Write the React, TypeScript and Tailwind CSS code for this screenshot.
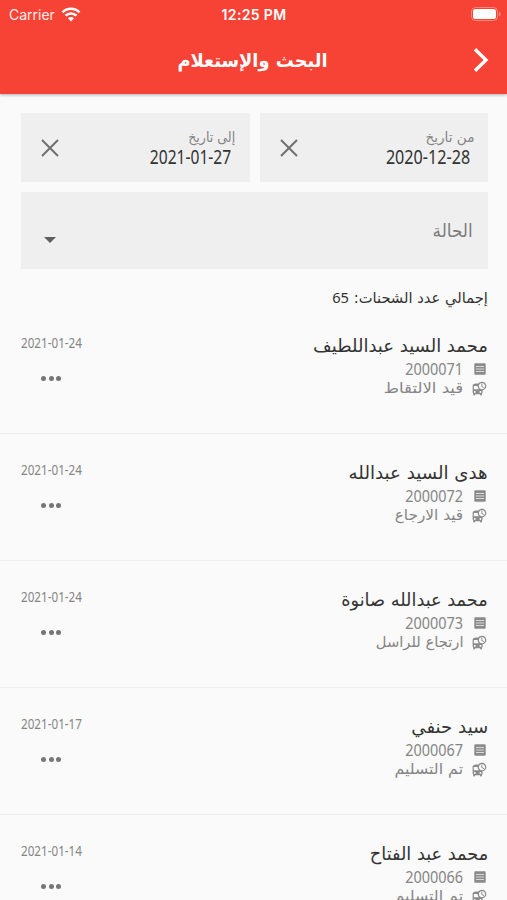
import type { ReactNode } from 'react'
import { MdDepartureBoard } from 'react-icons/md'

interface Shipment {
  code: string
  name: string
  nameScale: string
  status: string
  statusScale: string
  date: string
}

const SHIPMENTS: Shipment[] = [
  { code: '2000071', name: 'محمد السيد عبداللطيف', nameScale: 'scale-x-100', status: 'قيد الالتقاط', statusScale: 'scale-x-[1.1]', date: '2021-01-24' },
  { code: '2000072', name: 'هدى السيد عبدالله', nameScale: 'scale-x-[1.01]', status: 'قيد الارجاع', statusScale: 'scale-x-[1.02]', date: '2021-01-24' },
  { code: '2000073', name: 'محمد عبدالله صانوة', nameScale: 'scale-x-[0.985]', status: 'ارتجاع للراسل', statusScale: 'scale-x-[0.98]', date: '2021-01-24' },
  { code: '2000067', name: 'سيد حنفي', nameScale: 'scale-x-[1.01]', status: 'تم التسليم', statusScale: 'scale-x-[1.055]', date: '2021-01-17' },
  { code: '2000066', name: 'محمد عبد الفتاح', nameScale: 'scale-x-[0.985]', status: 'تم التسليم', statusScale: 'scale-x-[1.055]', date: '2021-01-14' },
]

function StatusBar() {
  return (
    <div dir="ltr" className="relative flex h-7 items-center justify-between pl-[9px] pr-[6px] font-['Inter',sans-serif] text-white">
      <div className="flex items-center gap-[6px]">
        <span className="text-[14px] text-white/90">Carrier</span>
        <svg width="20" height="15" viewBox="0 0 19 15" fill="none" stroke="currentColor" strokeWidth="2.6">
          <path d="M1 5.3a12 12 0 0 1 17 0" />
          <path d="M4 8.7a7.8 7.8 0 0 1 11 0" />
          <path d="M9.5 14.5 6.4 11.3a4.4 4.4 0 0 1 6.2 0Z" fill="currentColor" stroke="none" />
        </svg>
      </div>
      <span className="absolute inset-x-0 pl-px text-center text-[14px] font-semibold tracking-[0.35px]">12:25 PM</span>
      <svg width="30" height="14" viewBox="0 0 30 14">
        <rect x=".5" y=".5" width="26" height="13" rx="4" fill="none" stroke="#fff" strokeOpacity=".35" />
        <rect x="2" y="2" width="23" height="10" rx="2.5" fill="#fff" />
        <path d="M28 4.5c2 .8 2 4.2 0 5Z" fill="#fff" fillOpacity=".4" />
      </svg>
    </div>
  )
}

function Header() {
  return (
    <header className="relative z-10 h-[94px] bg-[#f64336] shadow-[0_1px_3px_rgba(0,0,0,0.3)]">
      <StatusBar />
      <div className="relative flex h-[66px] items-center justify-start pr-[17px]">
        <svg width="18" height="26" viewBox="0 0 18 26" fill="none" stroke="#fff" strokeWidth="3.4" className="-mt-[3px]">
          <path d="M3 2.2 14 13 3 23.8" />
        </svg>
        <h1 className="absolute inset-x-0 -mt-[2px] scale-x-[0.94] pr-[2px] text-center text-[19px] font-bold text-white">
          البحث والإستعلام
        </h1>
      </div>
    </header>
  )
}

function Digits({ children, className }: { children: ReactNode; className: string }) {
  return (
    <span dir="ltr" className={`block w-max font-['Noto_Sans',sans-serif] ${className}`}>
      {children}
    </span>
  )
}

interface DateFieldProps {
  label: string
  value: string
  labelScale: string
  valueScale: string
}

function DateField({ label, value, labelScale, valueScale }: DateFieldProps) {
  return (
    <div className="flex h-[69px] flex-1 items-center justify-between bg-[#efefef] pl-[20px] pr-[14px]">
      <div>
        <p className={`mt-px h-[20px] w-max origin-right text-[14px] leading-[20px] text-[#858585] ${labelScale}`}>{label}</p>
        <Digits className={`mr-1 h-[22px] origin-right text-[19px] leading-[21px] text-[#333] ${valueScale}`}>{value}</Digits>
      </div>
      <svg width="18" height="18" viewBox="0 0 18 18" stroke="#707070" strokeWidth="2">
        <path d="M1 1l16 16M17 1 1 17" />
      </svg>
    </div>
  )
}

function ListGlyph() {
  return (
    <svg width="12" height="12" viewBox="0 0 12 12">
      <rect x=".3" y=".3" width="11.4" height="11.4" rx=".8" fill="#8b8b8b" />
      <path d="M2 3.5h8M2 6h8M2 8.5h8" stroke="#d8d8d8" />
    </svg>
  )
}

function ShipmentRow({ item }: { item: Shipment }) {
  return (
    <li className="flex h-[127px] shrink-0 justify-between border-b border-[#eeeeee] pl-[21px] pr-[19px] pt-[26px]">
      <div>
        <p className={`h-[26px] w-max origin-right text-[18px] leading-[25px] text-[#333] ${item.nameScale}`}>{item.name}</p>
        <div className="flex h-[20px] items-center">
          <span className="flex w-[25px] pr-[2px]">
            <ListGlyph />
          </span>
          <Digits className="origin-right scale-x-[0.875] text-[16.5px] leading-[20px] text-[#858585]">{item.code}</Digits>
        </div>
        <div className="flex h-[19px] items-center">
          <span className="flex w-[25px] pr-[1px]">
            <MdDepartureBoard size={15} color="#8b8b8b" />
          </span>
          <p className={`w-max origin-right text-[15px] leading-[19px] text-[#858585] ${item.statusScale}`}>{item.status}</p>
        </div>
      </div>
      <div dir="ltr" className="w-[60px]">
        <Digits className="origin-left scale-x-[0.865] text-[13.5px] leading-[21px] text-[#858585]">{item.date}</Digits>
        <div className="mt-[22px] flex justify-center gap-[2.5px]">
          <i className="size-[5px] rounded-full bg-[#767676]" />
          <i className="size-[5px] rounded-full bg-[#767676]" />
          <i className="size-[5px] rounded-full bg-[#767676]" />
        </div>
      </div>
    </li>
  )
}

export default function App() {
  return (
    <main dir="rtl" className="flex h-[900px] w-[507px] flex-col overflow-hidden bg-[#fafafa] font-['DejaVu_Sans',sans-serif]">
      <Header />
      <section className="pl-[21px] pr-[19px] pt-[19px]">
        <div className="flex gap-[10px]">
          <DateField label="من تاريخ" value="2020-12-28" labelScale="scale-x-[0.97]" valueScale="scale-x-85" />
          <DateField label="إلى تاريخ" value="2021-01-27" labelScale="scale-x-[0.9]" valueScale="scale-x-[0.82]" />
        </div>
        <div className="mt-[10px] flex h-[77px] items-center justify-between bg-[#efefef] pl-[23px] pr-[15px]">
          <span className="origin-right scale-x-[0.94] text-[18px] text-[#7c7c7c]">الحالة</span>
          <svg width="12" height="6" viewBox="0 0 12 6" className="mt-[19px]">
            <path d="M0 0h12L6 6Z" fill="#5f5f5f" />
          </svg>
        </div>
        <p className="mt-[18px] h-[20px] w-max origin-right scale-x-[0.98] text-[15px] leading-[21px] text-[#333]">
          إجمالي عدد الشحنات: <span className="font-['Noto_Sans',sans-serif]">65</span>
        </p>
      </section>
      <ul className="flex flex-col">
        {SHIPMENTS.map((item) => (
          <ShipmentRow key={item.code} item={item} />
        ))}
      </ul>
    </main>
  )
}
